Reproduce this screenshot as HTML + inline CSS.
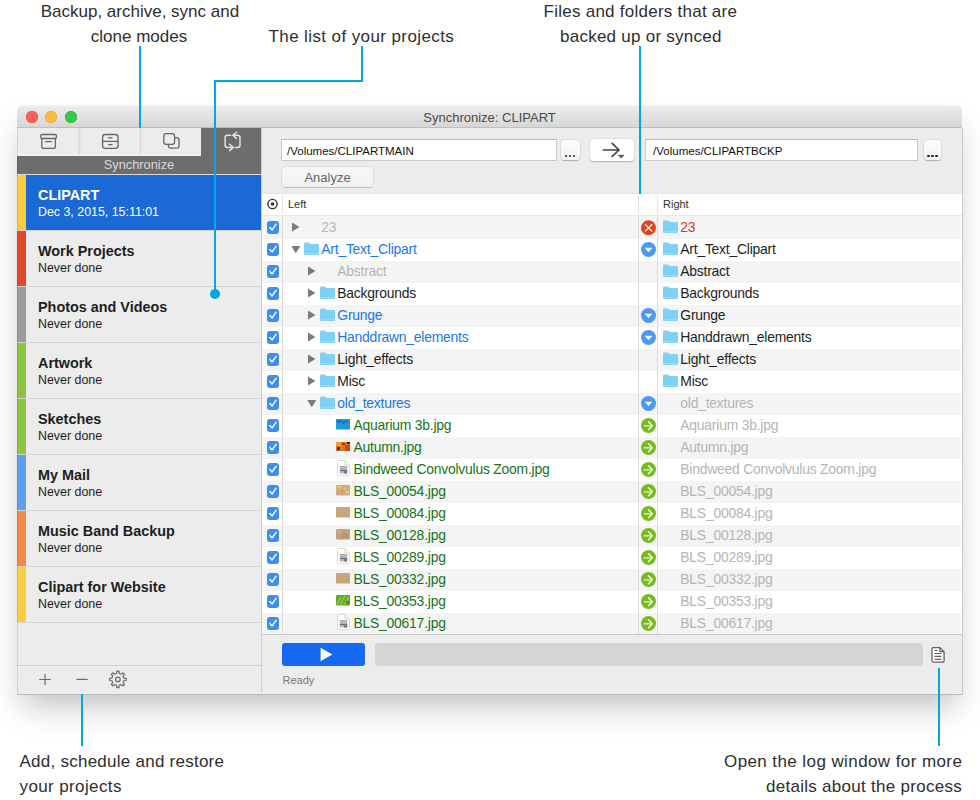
<!DOCTYPE html><html><head><meta charset="utf-8"><style>
*{box-sizing:border-box;margin:0;padding:0}
html,body{width:980px;height:800px;overflow:hidden;background:#fff;font-family:"Liberation Sans",sans-serif;position:relative}
div,span,svg{position:absolute;white-space:nowrap}
.ann{font-size:17px;color:#2e2e2e;line-height:20px}
.bl{background:#00a8e6}
.tl{top:111px;width:12px;height:12px;border-radius:50%}
.st{left:17px;width:8.5px;height:55px}
.nm{left:38px;font-size:14.4px;font-weight:bold;color:#1e1e1e}
.dt{left:38px;font-size:12.4px;color:#1e1e1e}
.sep{background:#d6d6d6;height:1.4px;left:17px;width:244px}
.tx{font-size:13.9px;line-height:16px;letter-spacing:-0.22px}
.cb{left:266.5px;width:12px;height:12.3px;border-radius:3px;background:#3a8ff5}
.fo{width:16px;height:14px}
.ic{width:15px;height:15px}
</style></head><body>
<div class="ann" style="left:40.7px;top:2px;letter-spacing:0px">Backup, archive, sync and</div>
<div class="ann" style="left:90.8px;top:27px;letter-spacing:0px">clone modes</div>
<div class="ann" style="left:268.5px;top:27px;letter-spacing:0.4px">The list of your projects</div>
<div class="ann" style="left:543.6px;top:2px;letter-spacing:0.25px">Files and folders that are</div>
<div class="ann" style="left:560px;top:27px;letter-spacing:0.25px">backed up or synced</div>
<div class="ann" style="left:19.5px;top:752px;letter-spacing:0.25px">Add, schedule and restore</div>
<div class="ann" style="left:19.5px;top:777px;letter-spacing:0.38px">your projects</div>
<div class="ann" style="left:724px;top:752px;letter-spacing:0.41px">Open the log window for more</div>
<div class="ann" style="left:766px;top:777px;letter-spacing:0.28px">details about the process</div>
<div style="left:17px;top:105px;width:945px;height:589px;background:#ececec;border-radius:6px 6px 0 0;box-shadow:0 18px 30px -6px rgba(0,0,0,0.25)"></div>
<div style="left:17px;top:105px;width:945px;height:23px;background:linear-gradient(#f6f6f6,#ebebeb 9%,#d6d6d6);border-bottom:1px solid #bfbfbf;border-radius:6px 6px 0 0"></div>
<div class="tl" style="left:25.6px;background:#fc605c;box-shadow:inset 0 0 0 0.5px #de4a45"></div>
<div class="tl" style="left:45.4px;background:#fdbc40;box-shadow:inset 0 0 0 0.5px #dea236"></div>
<div class="tl" style="left:65.3px;background:#34c84a;box-shadow:inset 0 0 0 0.5px #27aa35"></div>
<div style="left:17px;top:110px;width:945px;text-align:center;font-size:13px;color:#4a4a4a">Synchronize: CLIPART</div>
<div style="left:17px;top:128px;width:244px;height:566px;background:#ececec"></div>
<div style="left:261px;top:128px;width:1px;height:566px;background:#cdcdcd"></div>
<div style="left:201px;top:128px;width:60px;height:46px;background:#6d6d6d"></div>
<div style="left:17px;top:155.5px;width:244px;height:18.5px;background:#6d6d6d"></div>
<div style="left:77.8px;top:128px;width:3px;height:27px;background:linear-gradient(90deg,#f3f3f3,#d9d9d9 30%,#d9d9d9 70%,#f3f3f3)"></div>
<div style="left:138.8px;top:128px;width:3px;height:27px;background:linear-gradient(90deg,#f3f3f3,#d9d9d9 30%,#d9d9d9 70%,#f3f3f3)"></div>
<div style="left:17px;top:153.5px;width:184px;height:2px;background:#f1f1f1"></div>
<div style="left:17px;top:157.3px;width:244px;text-align:center;font-size:12.8px;color:#d9d9d9">Synchronize</div>
<div style="left:17px;top:174px;width:244px;height:1px;background:#dcdcdc"></div>
<svg style="left:0;top:0" width="262" height="175" viewBox="0 0 262 175" fill="none" stroke-linecap="round"><rect x="40.8" y="134.5" width="15.6" height="4" rx="1.3" stroke="#666" stroke-width="1.3"/><path d="M41.8 138.5 V146.4 a2 2 0 0 0 2 2 H53.4 a2 2 0 0 0 2-2 V138.5" stroke="#666" stroke-width="1.3"/><path d="M45.6 141.6 H51.6" stroke="#666" stroke-width="1.3"/><rect x="102.6" y="134.5" width="15.4" height="13.9" rx="2.6" stroke="#666" stroke-width="1.3"/><path d="M102.6 141.3 H118" stroke="#666" stroke-width="1.3"/><path d="M108.6 137.8 H112 M108.6 144.6 H112" stroke="#666" stroke-width="1.3"/><rect x="163.8" y="133.6" width="10.8" height="10.8" rx="2.4" stroke="#666" stroke-width="1.3"/><path d="M174.6 137.6 H176.6 a2.4 2.4 0 0 1 2.4 2.4 V145.8 a2.4 2.4 0 0 1-2.4 2.4 H170.8 a2.4 2.4 0 0 1-2.4-2.4 V144.4" stroke="#666" stroke-width="1.3"/><g stroke="#e4e4e4" stroke-width="1.5"><path d="M230.6 135.3 H227.6 a2.5 2.5 0 0 0-2.5 2.5 V145 a2.5 2.5 0 0 0 2.5 2.5 H233.2"/><path d="M229.6 144.4 L233.2 147.5 L229.6 150.6"/><path d="M233 135.3 H237.5 a2.5 2.5 0 0 1 2.5 2.5 V145 a2.5 2.5 0 0 1-2.5 2.5 H235.4"/><path d="M236.5 132.2 L233 135.3 L236.5 138.4"/></g></svg>
<div style="left:25.5px;top:175px;width:235.5px;height:55px;background:#1a69d6"></div>
<div class="st" style="top:175px;background:#f9cd3e"></div>
<div class="nm" style="top:187px;color:#fff">CLIPART</div>
<div class="dt" style="top:205px;color:#fff">Dec 3, 2015, 15:11:01</div>
<div class="sep" style="top:230px"></div>
<div class="st" style="top:231px;background:#e2492b"></div>
<div class="nm" style="top:243px;color:#1e1e1e">Work Projects</div>
<div class="dt" style="top:261px;color:#1e1e1e">Never done</div>
<div class="sep" style="top:286px"></div>
<div class="st" style="top:287px;background:#9c9c9c"></div>
<div class="nm" style="top:299px;color:#1e1e1e">Photos and Videos</div>
<div class="dt" style="top:317px;color:#1e1e1e">Never done</div>
<div class="sep" style="top:342px"></div>
<div class="st" style="top:343px;background:#8cc43f"></div>
<div class="nm" style="top:355px;color:#1e1e1e">Artwork</div>
<div class="dt" style="top:373px;color:#1e1e1e">Never done</div>
<div class="sep" style="top:398px"></div>
<div class="st" style="top:399px;background:#8cc43f"></div>
<div class="nm" style="top:411px;color:#1e1e1e">Sketches</div>
<div class="dt" style="top:429px;color:#1e1e1e">Never done</div>
<div class="sep" style="top:454px"></div>
<div class="st" style="top:455px;background:#5ba0f1"></div>
<div class="nm" style="top:467px;color:#1e1e1e">My Mail</div>
<div class="dt" style="top:485px;color:#1e1e1e">Never done</div>
<div class="sep" style="top:510px"></div>
<div class="st" style="top:511px;background:#f38a4a"></div>
<div class="nm" style="top:523px;color:#1e1e1e">Music Band Backup</div>
<div class="dt" style="top:541px;color:#1e1e1e">Never done</div>
<div class="sep" style="top:566px"></div>
<div class="st" style="top:567px;background:#f9cd3e"></div>
<div class="nm" style="top:579px;color:#1e1e1e">Clipart for Website</div>
<div class="dt" style="top:597px;color:#1e1e1e">Never done</div>
<div class="sep" style="top:622px"></div>
<div style="left:17px;top:665px;width:244px;height:1px;background:#cfcfcf"></div>
<svg style="left:0;top:660px" width="262" height="40" viewBox="0 660 262 40" fill="none" stroke="#6a6a6a" stroke-width="1.2"><path d="M39.3 679.5 H50.8 M45.05 674 V685"/><path d="M76.4 679.4 H87.7"/><path d="M123.84 678.03 L126.13 678.32 L126.13 680.48 L123.84 680.77 L123.07 682.63 L124.48 684.45 L122.95 685.98 L121.13 684.57 L119.27 685.34 L118.98 687.63 L116.82 687.63 L116.53 685.34 L114.67 684.57 L112.85 685.98 L111.32 684.45 L112.73 682.63 L111.96 680.77 L109.67 680.48 L109.67 678.32 L111.96 678.03 L112.73 676.17 L111.32 674.35 L112.85 672.82 L114.67 674.23 L116.53 673.46 L116.82 671.17 L118.98 671.17 L119.27 673.46 L121.13 674.23 L122.95 672.82 L124.48 674.35 L123.07 676.17 Z" stroke-linejoin="round"/><circle cx="117.9" cy="679.4" r="2.3"/></svg>
<div style="left:17px;top:693px;width:945px;height:1px;background:#f0f0f0"></div>
<div style="left:17px;top:694px;width:945px;height:1px;background:#b8b8b8"></div>
<div style="left:17px;top:128px;width:1px;height:566px;background:rgba(0,0,0,0.1)"></div>
<div style="left:962px;top:128px;width:1px;height:567px;background:#c9c9c9"></div>
<div style="left:262px;top:128px;width:700px;height:66px;background:#ececec"></div>
<div style="left:280.5px;top:139px;width:276.0px;height:22px;background:#fff;border:1px solid #cacaca;border-top-color:#bdbdbd"></div>
<div style="left:287.0px;top:145px;font-size:11.5px;color:#111">/Volumes/CLIPARTMAIN</div>
<div style="left:560.5px;top:139.6px;width:19.5px;height:20.7px;border-radius:3.5px;background:linear-gradient(#fdfdfd,#f3f3f3);box-shadow:0 0 0 0.5px rgba(0,0,0,0.1),0 0.5px 1px rgba(0,0,0,0.22)"></div>
<div style="left:565.15px;top:154.8px;width:2.2px;height:2.2px;border-radius:50%;background:#222"></div>
<div style="left:569.15px;top:154.8px;width:2.2px;height:2.2px;border-radius:50%;background:#222"></div>
<div style="left:573.15px;top:154.8px;width:2.2px;height:2.2px;border-radius:50%;background:#222"></div>
<div style="left:644.6px;top:139px;width:273.9px;height:22px;background:#fff;border:1px solid #cacaca;border-top-color:#bdbdbd"></div>
<div style="left:653.1px;top:145px;font-size:11.5px;color:#111">/Volumes/CLIPARTBCKP</div>
<div style="left:923.7px;top:139.6px;width:17.5px;height:20.7px;border-radius:3.5px;background:linear-gradient(#fdfdfd,#f3f3f3);box-shadow:0 0 0 0.5px rgba(0,0,0,0.1),0 0.5px 1px rgba(0,0,0,0.22)"></div>
<div style="left:927.35px;top:154.8px;width:2.2px;height:2.2px;border-radius:50%;background:#222"></div>
<div style="left:931.35px;top:154.8px;width:2.2px;height:2.2px;border-radius:50%;background:#222"></div>
<div style="left:935.35px;top:154.8px;width:2.2px;height:2.2px;border-radius:50%;background:#222"></div>
<div style="left:590px;top:139px;width:44px;height:22px;border-radius:4px;background:#fff;box-shadow:0 0.5px 1.5px rgba(0,0,0,0.25)"></div>
<svg style="left:590px;top:139px" width="44" height="22" viewBox="590 139 44 22" fill="none" stroke="#444" stroke-width="1.7" stroke-linecap="round" stroke-linejoin="round"><path d="M603.3 150 H619 M612.2 143.4 L619 150 L612.2 156.4"/><path d="M618.4 155.2 H624 L621.2 158 Z" fill="#444" stroke-width="0.5"/></svg>
<div style="left:282px;top:166.8px;width:91px;height:20.5px;border-radius:4px;background:linear-gradient(#f7f7f7,#f1f1f1);box-shadow:0 0 0 0.5px rgba(0,0,0,0.12),0 0.5px 1px rgba(0,0,0,0.15)"></div>
<div style="left:282px;top:170px;width:91px;text-align:center;font-size:13px;color:#666">Analyze</div>
<div style="left:262px;top:194px;width:700px;height:440px;background:#fff"></div>
<div style="left:262px;top:215px;width:700px;height:1px;background:#e8e8e8"></div>
<div style="left:262px;top:193px;width:700px;height:1px;background:#e2e2e2"></div>
<div style="left:282px;top:196px;width:1px;height:17px;background:#e2e2e2"></div>
<div style="left:638px;top:196px;width:1px;height:17px;background:#e2e2e2"></div>
<div style="left:657px;top:196px;width:1px;height:17px;background:#e2e2e2"></div>
<svg style="left:266px;top:198px" width="13" height="13" viewBox="0 0 13 13"><circle cx="6.5" cy="6" r="4.6" fill="none" stroke="#333" stroke-width="1.4"/><circle cx="6.5" cy="6" r="1.8" fill="#333"/></svg>
<div style="left:288px;top:198px;font-size:11px;color:#333">Left</div>
<div style="left:663px;top:198px;font-size:11px;color:#333">Right</div>
<div style="left:262px;top:216px;width:699px;height:22.6px;background:#f4f4f4"></div>
<div class="cb" style="top:221.3px"></div>
<svg style="left:266.5px;top:221.3px" width="12" height="12" viewBox="0 0 12 12"><path d="M2.9 6.6 L5.1 8.9 L9.2 3.2" fill="none" stroke="#fff" stroke-width="1.4" stroke-linecap="round" stroke-linejoin="round"/></svg>
<svg style="left:291px;top:222px" width="10" height="10" viewBox="0 0 10 10"><path d="M1 0.5 L8.5 5 L1 9.5 Z" fill="#7b7b7b"/></svg>
<div class="tx" style="left:321.3px;top:219px;color:#b5b5b5">23</div>
<svg class="ic" style="left:641.4px;top:220px" viewBox="0 0 15 15"><circle cx="7.5" cy="7.7" r="7.5" fill="#df431f"/><path d="M4.3 4.5 L10.9 11.1 M10.9 4.5 L4.3 11.1" stroke="#fff" stroke-width="1.2" stroke-linecap="round"/></svg>
<svg class="fo" style="left:663px;top:220px" width="16" height="14" viewBox="0 0 16 14"><path d="M0 1.4 a1 1 0 0 1 1-1 H4.8 a1 1 0 0 1 0.8 0.4 L6.6 1.9 H14 a1 1 0 0 1 1 1 V11.8 a1 1 0 0 1-1 1 H1 a1 1 0 0 1-1-1 Z" fill="#88d0f2"/><path d="M0 3.2 H15 V11.8 a1 1 0 0 1-1 1 H1 a1 1 0 0 1-1-1 Z" fill="#7dd0f6"/><rect x="0.6" y="10.8" width="13.8" height="1.2" fill="#92dcfa"/></svg>
<div class="tx" style="left:680.3px;top:219px;color:#d8401f">23</div>
<div class="cb" style="top:243.3px"></div>
<svg style="left:266.5px;top:243.3px" width="12" height="12" viewBox="0 0 12 12"><path d="M2.9 6.6 L5.1 8.9 L9.2 3.2" fill="none" stroke="#fff" stroke-width="1.4" stroke-linecap="round" stroke-linejoin="round"/></svg>
<svg style="left:291px;top:245px" width="10" height="10" viewBox="0 0 10 10"><path d="M0.3 1 L9.3 1 L4.8 8.2 Z" fill="#7b7b7b"/></svg>
<svg class="fo" style="left:304px;top:242px" width="16" height="14" viewBox="0 0 16 14"><path d="M0 1.4 a1 1 0 0 1 1-1 H4.8 a1 1 0 0 1 0.8 0.4 L6.6 1.9 H14 a1 1 0 0 1 1 1 V11.8 a1 1 0 0 1-1 1 H1 a1 1 0 0 1-1-1 Z" fill="#88d0f2"/><path d="M0 3.2 H15 V11.8 a1 1 0 0 1-1 1 H1 a1 1 0 0 1-1-1 Z" fill="#7dd0f6"/><rect x="0.6" y="10.8" width="13.8" height="1.2" fill="#92dcfa"/></svg>
<div class="tx" style="left:321.3px;top:241px;color:#1877f0">Art_Text_Clipart</div>
<svg class="ic" style="left:641.4px;top:242px" viewBox="0 0 15 15"><circle cx="7.5" cy="7.5" r="7.5" fill="#4b99f5"/><path d="M3.7 5.7 H11.3 L7.5 10.3 Z" fill="#fff"/></svg>
<svg class="fo" style="left:663px;top:242px" width="16" height="14" viewBox="0 0 16 14"><path d="M0 1.4 a1 1 0 0 1 1-1 H4.8 a1 1 0 0 1 0.8 0.4 L6.6 1.9 H14 a1 1 0 0 1 1 1 V11.8 a1 1 0 0 1-1 1 H1 a1 1 0 0 1-1-1 Z" fill="#88d0f2"/><path d="M0 3.2 H15 V11.8 a1 1 0 0 1-1 1 H1 a1 1 0 0 1-1-1 Z" fill="#7dd0f6"/><rect x="0.6" y="10.8" width="13.8" height="1.2" fill="#92dcfa"/></svg>
<div class="tx" style="left:680.3px;top:241px;color:#1e1e1e">Art_Text_Clipart</div>
<div style="left:262px;top:260.6px;width:699px;height:22px;background:#f4f4f4"></div>
<div class="cb" style="top:265.3px"></div>
<svg style="left:266.5px;top:265.3px" width="12" height="12" viewBox="0 0 12 12"><path d="M2.9 6.6 L5.1 8.9 L9.2 3.2" fill="none" stroke="#fff" stroke-width="1.4" stroke-linecap="round" stroke-linejoin="round"/></svg>
<svg style="left:307px;top:266px" width="10" height="10" viewBox="0 0 10 10"><path d="M1 0.5 L8.5 5 L1 9.5 Z" fill="#7b7b7b"/></svg>
<div class="tx" style="left:337.3px;top:263px;color:#b5b5b5">Abstract</div>
<svg class="fo" style="left:663px;top:264px" width="16" height="14" viewBox="0 0 16 14"><path d="M0 1.4 a1 1 0 0 1 1-1 H4.8 a1 1 0 0 1 0.8 0.4 L6.6 1.9 H14 a1 1 0 0 1 1 1 V11.8 a1 1 0 0 1-1 1 H1 a1 1 0 0 1-1-1 Z" fill="#88d0f2"/><path d="M0 3.2 H15 V11.8 a1 1 0 0 1-1 1 H1 a1 1 0 0 1-1-1 Z" fill="#7dd0f6"/><rect x="0.6" y="10.8" width="13.8" height="1.2" fill="#92dcfa"/></svg>
<div class="tx" style="left:680.3px;top:263px;color:#1e1e1e">Abstract</div>
<div class="cb" style="top:287.3px"></div>
<svg style="left:266.5px;top:287.3px" width="12" height="12" viewBox="0 0 12 12"><path d="M2.9 6.6 L5.1 8.9 L9.2 3.2" fill="none" stroke="#fff" stroke-width="1.4" stroke-linecap="round" stroke-linejoin="round"/></svg>
<svg style="left:307px;top:288px" width="10" height="10" viewBox="0 0 10 10"><path d="M1 0.5 L8.5 5 L1 9.5 Z" fill="#7b7b7b"/></svg>
<svg class="fo" style="left:320px;top:286px" width="16" height="14" viewBox="0 0 16 14"><path d="M0 1.4 a1 1 0 0 1 1-1 H4.8 a1 1 0 0 1 0.8 0.4 L6.6 1.9 H14 a1 1 0 0 1 1 1 V11.8 a1 1 0 0 1-1 1 H1 a1 1 0 0 1-1-1 Z" fill="#88d0f2"/><path d="M0 3.2 H15 V11.8 a1 1 0 0 1-1 1 H1 a1 1 0 0 1-1-1 Z" fill="#7dd0f6"/><rect x="0.6" y="10.8" width="13.8" height="1.2" fill="#92dcfa"/></svg>
<div class="tx" style="left:337.3px;top:285px;color:#1e1e1e">Backgrounds</div>
<svg class="fo" style="left:663px;top:286px" width="16" height="14" viewBox="0 0 16 14"><path d="M0 1.4 a1 1 0 0 1 1-1 H4.8 a1 1 0 0 1 0.8 0.4 L6.6 1.9 H14 a1 1 0 0 1 1 1 V11.8 a1 1 0 0 1-1 1 H1 a1 1 0 0 1-1-1 Z" fill="#88d0f2"/><path d="M0 3.2 H15 V11.8 a1 1 0 0 1-1 1 H1 a1 1 0 0 1-1-1 Z" fill="#7dd0f6"/><rect x="0.6" y="10.8" width="13.8" height="1.2" fill="#92dcfa"/></svg>
<div class="tx" style="left:680.3px;top:285px;color:#1e1e1e">Backgrounds</div>
<div style="left:262px;top:304.6px;width:699px;height:22px;background:#f4f4f4"></div>
<div class="cb" style="top:309.3px"></div>
<svg style="left:266.5px;top:309.3px" width="12" height="12" viewBox="0 0 12 12"><path d="M2.9 6.6 L5.1 8.9 L9.2 3.2" fill="none" stroke="#fff" stroke-width="1.4" stroke-linecap="round" stroke-linejoin="round"/></svg>
<svg style="left:307px;top:310px" width="10" height="10" viewBox="0 0 10 10"><path d="M1 0.5 L8.5 5 L1 9.5 Z" fill="#7b7b7b"/></svg>
<svg class="fo" style="left:320px;top:308px" width="16" height="14" viewBox="0 0 16 14"><path d="M0 1.4 a1 1 0 0 1 1-1 H4.8 a1 1 0 0 1 0.8 0.4 L6.6 1.9 H14 a1 1 0 0 1 1 1 V11.8 a1 1 0 0 1-1 1 H1 a1 1 0 0 1-1-1 Z" fill="#88d0f2"/><path d="M0 3.2 H15 V11.8 a1 1 0 0 1-1 1 H1 a1 1 0 0 1-1-1 Z" fill="#7dd0f6"/><rect x="0.6" y="10.8" width="13.8" height="1.2" fill="#92dcfa"/></svg>
<div class="tx" style="left:337.3px;top:307px;color:#1877f0">Grunge</div>
<svg class="ic" style="left:641.4px;top:308px" viewBox="0 0 15 15"><circle cx="7.5" cy="7.5" r="7.5" fill="#4b99f5"/><path d="M3.7 5.7 H11.3 L7.5 10.3 Z" fill="#fff"/></svg>
<svg class="fo" style="left:663px;top:308px" width="16" height="14" viewBox="0 0 16 14"><path d="M0 1.4 a1 1 0 0 1 1-1 H4.8 a1 1 0 0 1 0.8 0.4 L6.6 1.9 H14 a1 1 0 0 1 1 1 V11.8 a1 1 0 0 1-1 1 H1 a1 1 0 0 1-1-1 Z" fill="#88d0f2"/><path d="M0 3.2 H15 V11.8 a1 1 0 0 1-1 1 H1 a1 1 0 0 1-1-1 Z" fill="#7dd0f6"/><rect x="0.6" y="10.8" width="13.8" height="1.2" fill="#92dcfa"/></svg>
<div class="tx" style="left:680.3px;top:307px;color:#1e1e1e">Grunge</div>
<div class="cb" style="top:331.3px"></div>
<svg style="left:266.5px;top:331.3px" width="12" height="12" viewBox="0 0 12 12"><path d="M2.9 6.6 L5.1 8.9 L9.2 3.2" fill="none" stroke="#fff" stroke-width="1.4" stroke-linecap="round" stroke-linejoin="round"/></svg>
<svg style="left:307px;top:332px" width="10" height="10" viewBox="0 0 10 10"><path d="M1 0.5 L8.5 5 L1 9.5 Z" fill="#7b7b7b"/></svg>
<svg class="fo" style="left:320px;top:330px" width="16" height="14" viewBox="0 0 16 14"><path d="M0 1.4 a1 1 0 0 1 1-1 H4.8 a1 1 0 0 1 0.8 0.4 L6.6 1.9 H14 a1 1 0 0 1 1 1 V11.8 a1 1 0 0 1-1 1 H1 a1 1 0 0 1-1-1 Z" fill="#88d0f2"/><path d="M0 3.2 H15 V11.8 a1 1 0 0 1-1 1 H1 a1 1 0 0 1-1-1 Z" fill="#7dd0f6"/><rect x="0.6" y="10.8" width="13.8" height="1.2" fill="#92dcfa"/></svg>
<div class="tx" style="left:337.3px;top:329px;color:#1877f0">Handdrawn_elements</div>
<svg class="ic" style="left:641.4px;top:330px" viewBox="0 0 15 15"><circle cx="7.5" cy="7.5" r="7.5" fill="#4b99f5"/><path d="M3.7 5.7 H11.3 L7.5 10.3 Z" fill="#fff"/></svg>
<svg class="fo" style="left:663px;top:330px" width="16" height="14" viewBox="0 0 16 14"><path d="M0 1.4 a1 1 0 0 1 1-1 H4.8 a1 1 0 0 1 0.8 0.4 L6.6 1.9 H14 a1 1 0 0 1 1 1 V11.8 a1 1 0 0 1-1 1 H1 a1 1 0 0 1-1-1 Z" fill="#88d0f2"/><path d="M0 3.2 H15 V11.8 a1 1 0 0 1-1 1 H1 a1 1 0 0 1-1-1 Z" fill="#7dd0f6"/><rect x="0.6" y="10.8" width="13.8" height="1.2" fill="#92dcfa"/></svg>
<div class="tx" style="left:680.3px;top:329px;color:#1e1e1e">Handdrawn_elements</div>
<div style="left:262px;top:348.6px;width:699px;height:22px;background:#f4f4f4"></div>
<div class="cb" style="top:353.3px"></div>
<svg style="left:266.5px;top:353.3px" width="12" height="12" viewBox="0 0 12 12"><path d="M2.9 6.6 L5.1 8.9 L9.2 3.2" fill="none" stroke="#fff" stroke-width="1.4" stroke-linecap="round" stroke-linejoin="round"/></svg>
<svg style="left:307px;top:354px" width="10" height="10" viewBox="0 0 10 10"><path d="M1 0.5 L8.5 5 L1 9.5 Z" fill="#7b7b7b"/></svg>
<svg class="fo" style="left:320px;top:352px" width="16" height="14" viewBox="0 0 16 14"><path d="M0 1.4 a1 1 0 0 1 1-1 H4.8 a1 1 0 0 1 0.8 0.4 L6.6 1.9 H14 a1 1 0 0 1 1 1 V11.8 a1 1 0 0 1-1 1 H1 a1 1 0 0 1-1-1 Z" fill="#88d0f2"/><path d="M0 3.2 H15 V11.8 a1 1 0 0 1-1 1 H1 a1 1 0 0 1-1-1 Z" fill="#7dd0f6"/><rect x="0.6" y="10.8" width="13.8" height="1.2" fill="#92dcfa"/></svg>
<div class="tx" style="left:337.3px;top:351px;color:#1e1e1e">Light_effects</div>
<svg class="fo" style="left:663px;top:352px" width="16" height="14" viewBox="0 0 16 14"><path d="M0 1.4 a1 1 0 0 1 1-1 H4.8 a1 1 0 0 1 0.8 0.4 L6.6 1.9 H14 a1 1 0 0 1 1 1 V11.8 a1 1 0 0 1-1 1 H1 a1 1 0 0 1-1-1 Z" fill="#88d0f2"/><path d="M0 3.2 H15 V11.8 a1 1 0 0 1-1 1 H1 a1 1 0 0 1-1-1 Z" fill="#7dd0f6"/><rect x="0.6" y="10.8" width="13.8" height="1.2" fill="#92dcfa"/></svg>
<div class="tx" style="left:680.3px;top:351px;color:#1e1e1e">Light_effects</div>
<div class="cb" style="top:375.3px"></div>
<svg style="left:266.5px;top:375.3px" width="12" height="12" viewBox="0 0 12 12"><path d="M2.9 6.6 L5.1 8.9 L9.2 3.2" fill="none" stroke="#fff" stroke-width="1.4" stroke-linecap="round" stroke-linejoin="round"/></svg>
<svg style="left:307px;top:376px" width="10" height="10" viewBox="0 0 10 10"><path d="M1 0.5 L8.5 5 L1 9.5 Z" fill="#7b7b7b"/></svg>
<svg class="fo" style="left:320px;top:374px" width="16" height="14" viewBox="0 0 16 14"><path d="M0 1.4 a1 1 0 0 1 1-1 H4.8 a1 1 0 0 1 0.8 0.4 L6.6 1.9 H14 a1 1 0 0 1 1 1 V11.8 a1 1 0 0 1-1 1 H1 a1 1 0 0 1-1-1 Z" fill="#88d0f2"/><path d="M0 3.2 H15 V11.8 a1 1 0 0 1-1 1 H1 a1 1 0 0 1-1-1 Z" fill="#7dd0f6"/><rect x="0.6" y="10.8" width="13.8" height="1.2" fill="#92dcfa"/></svg>
<div class="tx" style="left:337.3px;top:373px;color:#1e1e1e">Misc</div>
<svg class="fo" style="left:663px;top:374px" width="16" height="14" viewBox="0 0 16 14"><path d="M0 1.4 a1 1 0 0 1 1-1 H4.8 a1 1 0 0 1 0.8 0.4 L6.6 1.9 H14 a1 1 0 0 1 1 1 V11.8 a1 1 0 0 1-1 1 H1 a1 1 0 0 1-1-1 Z" fill="#88d0f2"/><path d="M0 3.2 H15 V11.8 a1 1 0 0 1-1 1 H1 a1 1 0 0 1-1-1 Z" fill="#7dd0f6"/><rect x="0.6" y="10.8" width="13.8" height="1.2" fill="#92dcfa"/></svg>
<div class="tx" style="left:680.3px;top:373px;color:#1e1e1e">Misc</div>
<div style="left:262px;top:392.6px;width:699px;height:22px;background:#f4f4f4"></div>
<div class="cb" style="top:397.3px"></div>
<svg style="left:266.5px;top:397.3px" width="12" height="12" viewBox="0 0 12 12"><path d="M2.9 6.6 L5.1 8.9 L9.2 3.2" fill="none" stroke="#fff" stroke-width="1.4" stroke-linecap="round" stroke-linejoin="round"/></svg>
<svg style="left:307px;top:399px" width="10" height="10" viewBox="0 0 10 10"><path d="M0.3 1 L9.3 1 L4.8 8.2 Z" fill="#7b7b7b"/></svg>
<svg class="fo" style="left:320px;top:396px" width="16" height="14" viewBox="0 0 16 14"><path d="M0 1.4 a1 1 0 0 1 1-1 H4.8 a1 1 0 0 1 0.8 0.4 L6.6 1.9 H14 a1 1 0 0 1 1 1 V11.8 a1 1 0 0 1-1 1 H1 a1 1 0 0 1-1-1 Z" fill="#88d0f2"/><path d="M0 3.2 H15 V11.8 a1 1 0 0 1-1 1 H1 a1 1 0 0 1-1-1 Z" fill="#7dd0f6"/><rect x="0.6" y="10.8" width="13.8" height="1.2" fill="#92dcfa"/></svg>
<div class="tx" style="left:337.3px;top:395px;color:#1877f0">old_textures</div>
<svg class="ic" style="left:641.4px;top:396px" viewBox="0 0 15 15"><circle cx="7.5" cy="7.5" r="7.5" fill="#4b99f5"/><path d="M3.7 5.7 H11.3 L7.5 10.3 Z" fill="#fff"/></svg>
<div class="tx" style="left:680.3px;top:395px;color:#b5b5b5">old_textures</div>
<div class="cb" style="top:419.3px"></div>
<svg style="left:266.5px;top:419.3px" width="12" height="12" viewBox="0 0 12 12"><path d="M2.9 6.6 L5.1 8.9 L9.2 3.2" fill="none" stroke="#fff" stroke-width="1.4" stroke-linecap="round" stroke-linejoin="round"/></svg>
<svg style="left:336.1px;top:419px" width="14.3" height="10.7" viewBox="0 0 14.3 10.7"><clipPath id="c9"><rect width="14.3" height="10.7" rx="1.3"/></clipPath><g clip-path="url(#c9)"><rect width="14.3" height="10.7" fill="#1f97dc"/><path d="M0.5 1 L3 3.5 L5 1.5 L7.5 4.5 L10 2 L13 4" stroke="#1a6aa8" stroke-width="1.1" fill="none"/><path d="M1 6 L4 8.5" stroke="#3aa8e8" stroke-width="0.8"/></g></svg>
<div class="tx" style="left:353.5px;top:417px;color:#167516">Aquarium 3b.jpg</div>
<svg class="ic" style="left:641.4px;top:418px" viewBox="0 0 15 15"><circle cx="7.5" cy="7.5" r="7.5" fill="#78bb20"/><path d="M3.2 7.8 H10.8" stroke="#e6f3d2" stroke-width="1.3" stroke-linecap="round"/><path d="M7.4 3.8 L11.3 7.8 L7.4 11.8" fill="none" stroke="#fff" stroke-width="1.3" stroke-linecap="round" stroke-linejoin="round"/></svg>
<div class="tx" style="left:680.3px;top:417px;color:#b5b5b5">Aquarium 3b.jpg</div>
<div style="left:262px;top:436.6px;width:699px;height:22px;background:#f4f4f4"></div>
<div class="cb" style="top:441.3px"></div>
<svg style="left:266.5px;top:441.3px" width="12" height="12" viewBox="0 0 12 12"><path d="M2.9 6.6 L5.1 8.9 L9.2 3.2" fill="none" stroke="#fff" stroke-width="1.4" stroke-linecap="round" stroke-linejoin="round"/></svg>
<svg style="left:336.1px;top:441.5px" width="14.3" height="9.6" viewBox="0 0 14.3 9.6"><clipPath id="c10"><rect width="14.3" height="9.6" rx="1.3"/></clipPath><g clip-path="url(#c10)"><rect width="14.3" height="9.6" fill="#e07a1c"/><rect x="0" y="0" width="5" height="4" fill="#f0a030"/><rect x="9" y="3" width="5.3" height="6.6" fill="#d8401a"/><rect x="1" y="5" width="3" height="3" fill="#5a3010"/><rect x="6" y="1" width="3" height="2" fill="#c02a10"/><rect x="1" y="8" width="6" height="1.6" fill="#8a7a70"/><rect x="11" y="0" width="3" height="2" fill="#402010"/></g></svg>
<div class="tx" style="left:353.5px;top:439px;color:#167516">Autumn.jpg</div>
<svg class="ic" style="left:641.4px;top:440px" viewBox="0 0 15 15"><circle cx="7.5" cy="7.5" r="7.5" fill="#78bb20"/><path d="M3.2 7.8 H10.8" stroke="#e6f3d2" stroke-width="1.3" stroke-linecap="round"/><path d="M7.4 3.8 L11.3 7.8 L7.4 11.8" fill="none" stroke="#fff" stroke-width="1.3" stroke-linecap="round" stroke-linejoin="round"/></svg>
<div class="tx" style="left:680.3px;top:439px;color:#b5b5b5">Autumn.jpg</div>
<div class="cb" style="top:463.3px"></div>
<svg style="left:266.5px;top:463.3px" width="12" height="12" viewBox="0 0 12 12"><path d="M2.9 6.6 L5.1 8.9 L9.2 3.2" fill="none" stroke="#fff" stroke-width="1.4" stroke-linecap="round" stroke-linejoin="round"/></svg>
<svg style="left:337px;top:460px" width="13" height="17" viewBox="0 0 13 17"><path d="M1.5 0.5 H7.8 L12.5 5.2 V14.6 a1 1 0 0 1-1 1 H1.5 a1 1 0 0 1-1-1 V1.5 a1 1 0 0 1 1-1 Z" fill="#fff" stroke="#d4d4d4" stroke-width="0.9"/><path d="M7.8 0.5 V4.2 a1 1 0 0 0 1 1 H12.5" fill="#f2f2f2" stroke="#d4d4d4" stroke-width="0.8"/><rect x="2.8" y="6" width="7.4" height="1.3" fill="#c9a27a"/><rect x="2.8" y="7.3" width="7.4" height="2.6" fill="#8fb8ec"/><rect x="2.8" y="9.9" width="7.4" height="1.6" fill="#5a6e8a"/><rect x="2.8" y="11.5" width="4" height="2" fill="#b7b7b7"/><circle cx="8.6" cy="12" r="1.9" fill="#8a7a6a"/></svg>
<div class="tx" style="left:353.5px;top:461px;color:#167516">Bindweed Convolvulus Zoom.jpg</div>
<svg class="ic" style="left:641.4px;top:462px" viewBox="0 0 15 15"><circle cx="7.5" cy="7.5" r="7.5" fill="#78bb20"/><path d="M3.2 7.8 H10.8" stroke="#e6f3d2" stroke-width="1.3" stroke-linecap="round"/><path d="M7.4 3.8 L11.3 7.8 L7.4 11.8" fill="none" stroke="#fff" stroke-width="1.3" stroke-linecap="round" stroke-linejoin="round"/></svg>
<div class="tx" style="left:680.3px;top:461px;color:#b5b5b5">Bindweed Convolvulus Zoom.jpg</div>
<div style="left:262px;top:480.6px;width:699px;height:22px;background:#f4f4f4"></div>
<div class="cb" style="top:485.3px"></div>
<svg style="left:266.5px;top:485.3px" width="12" height="12" viewBox="0 0 12 12"><path d="M2.9 6.6 L5.1 8.9 L9.2 3.2" fill="none" stroke="#fff" stroke-width="1.4" stroke-linecap="round" stroke-linejoin="round"/></svg>
<svg style="left:336.1px;top:485px" width="14.3" height="10.7" viewBox="0 0 14.3 10.7"><clipPath id="c12"><rect width="14.3" height="10.7" rx="1.3"/></clipPath><g clip-path="url(#c12)"><rect width="14.3" height="10.7" fill="#cfae7e"/><rect x="2" y="1" width="3" height="2" fill="#e8cc60"/><rect x="8" y="2" width="2.5" height="2.5" fill="#e0c050"/><rect x="5" y="5" width="2" height="2" fill="#e08a60"/><rect x="10" y="6" width="3" height="2" fill="#e8d070"/><rect x="1" y="7" width="2" height="2" fill="#d89080"/></g></svg>
<div class="tx" style="left:353.5px;top:483px;color:#167516">BLS_00054.jpg</div>
<svg class="ic" style="left:641.4px;top:484px" viewBox="0 0 15 15"><circle cx="7.5" cy="7.5" r="7.5" fill="#78bb20"/><path d="M3.2 7.8 H10.8" stroke="#e6f3d2" stroke-width="1.3" stroke-linecap="round"/><path d="M7.4 3.8 L11.3 7.8 L7.4 11.8" fill="none" stroke="#fff" stroke-width="1.3" stroke-linecap="round" stroke-linejoin="round"/></svg>
<div class="tx" style="left:680.3px;top:483px;color:#b5b5b5">BLS_00054.jpg</div>
<div class="cb" style="top:507.3px"></div>
<svg style="left:266.5px;top:507.3px" width="12" height="12" viewBox="0 0 12 12"><path d="M2.9 6.6 L5.1 8.9 L9.2 3.2" fill="none" stroke="#fff" stroke-width="1.4" stroke-linecap="round" stroke-linejoin="round"/></svg>
<svg style="left:336.1px;top:507px" width="14.3" height="10.7" viewBox="0 0 14.3 10.7"><clipPath id="c13"><rect width="14.3" height="10.7" rx="1.3"/></clipPath><g clip-path="url(#c13)"><rect width="14.3" height="10.7" fill="#c8a57b"/></g></svg>
<div class="tx" style="left:353.5px;top:505px;color:#167516">BLS_00084.jpg</div>
<svg class="ic" style="left:641.4px;top:506px" viewBox="0 0 15 15"><circle cx="7.5" cy="7.5" r="7.5" fill="#78bb20"/><path d="M3.2 7.8 H10.8" stroke="#e6f3d2" stroke-width="1.3" stroke-linecap="round"/><path d="M7.4 3.8 L11.3 7.8 L7.4 11.8" fill="none" stroke="#fff" stroke-width="1.3" stroke-linecap="round" stroke-linejoin="round"/></svg>
<div class="tx" style="left:680.3px;top:505px;color:#b5b5b5">BLS_00084.jpg</div>
<div style="left:262px;top:524.6px;width:699px;height:22px;background:#f4f4f4"></div>
<div class="cb" style="top:529.3px"></div>
<svg style="left:266.5px;top:529.3px" width="12" height="12" viewBox="0 0 12 12"><path d="M2.9 6.6 L5.1 8.9 L9.2 3.2" fill="none" stroke="#fff" stroke-width="1.4" stroke-linecap="round" stroke-linejoin="round"/></svg>
<svg style="left:336.1px;top:529px" width="14.3" height="10.7" viewBox="0 0 14.3 10.7"><clipPath id="c14"><rect width="14.3" height="10.7" rx="1.3"/></clipPath><g clip-path="url(#c14)"><rect width="14.3" height="10.7" fill="#c2a27c"/><rect x="6" y="4" width="6" height="5" fill="#b8946a"/><rect x="1" y="1" width="4" height="3" fill="#cbb08c"/></g></svg>
<div class="tx" style="left:353.5px;top:527px;color:#167516">BLS_00128.jpg</div>
<svg class="ic" style="left:641.4px;top:528px" viewBox="0 0 15 15"><circle cx="7.5" cy="7.5" r="7.5" fill="#78bb20"/><path d="M3.2 7.8 H10.8" stroke="#e6f3d2" stroke-width="1.3" stroke-linecap="round"/><path d="M7.4 3.8 L11.3 7.8 L7.4 11.8" fill="none" stroke="#fff" stroke-width="1.3" stroke-linecap="round" stroke-linejoin="round"/></svg>
<div class="tx" style="left:680.3px;top:527px;color:#b5b5b5">BLS_00128.jpg</div>
<div class="cb" style="top:551.3px"></div>
<svg style="left:266.5px;top:551.3px" width="12" height="12" viewBox="0 0 12 12"><path d="M2.9 6.6 L5.1 8.9 L9.2 3.2" fill="none" stroke="#fff" stroke-width="1.4" stroke-linecap="round" stroke-linejoin="round"/></svg>
<svg style="left:337px;top:548px" width="13" height="17" viewBox="0 0 13 17"><path d="M1.5 0.5 H7.8 L12.5 5.2 V14.6 a1 1 0 0 1-1 1 H1.5 a1 1 0 0 1-1-1 V1.5 a1 1 0 0 1 1-1 Z" fill="#fff" stroke="#d4d4d4" stroke-width="0.9"/><path d="M7.8 0.5 V4.2 a1 1 0 0 0 1 1 H12.5" fill="#f2f2f2" stroke="#d4d4d4" stroke-width="0.8"/><rect x="2.8" y="6" width="7.4" height="1.3" fill="#c9a27a"/><rect x="2.8" y="7.3" width="7.4" height="2.6" fill="#8fb8ec"/><rect x="2.8" y="9.9" width="7.4" height="1.6" fill="#5a6e8a"/><rect x="2.8" y="11.5" width="4" height="2" fill="#b7b7b7"/><circle cx="8.6" cy="12" r="1.9" fill="#8a7a6a"/></svg>
<div class="tx" style="left:353.5px;top:549px;color:#167516">BLS_00289.jpg</div>
<svg class="ic" style="left:641.4px;top:550px" viewBox="0 0 15 15"><circle cx="7.5" cy="7.5" r="7.5" fill="#78bb20"/><path d="M3.2 7.8 H10.8" stroke="#e6f3d2" stroke-width="1.3" stroke-linecap="round"/><path d="M7.4 3.8 L11.3 7.8 L7.4 11.8" fill="none" stroke="#fff" stroke-width="1.3" stroke-linecap="round" stroke-linejoin="round"/></svg>
<div class="tx" style="left:680.3px;top:549px;color:#b5b5b5">BLS_00289.jpg</div>
<div style="left:262px;top:568.6px;width:699px;height:22px;background:#f4f4f4"></div>
<div class="cb" style="top:573.3px"></div>
<svg style="left:266.5px;top:573.3px" width="12" height="12" viewBox="0 0 12 12"><path d="M2.9 6.6 L5.1 8.9 L9.2 3.2" fill="none" stroke="#fff" stroke-width="1.4" stroke-linecap="round" stroke-linejoin="round"/></svg>
<svg style="left:336.1px;top:573px" width="14.3" height="10.7" viewBox="0 0 14.3 10.7"><clipPath id="c16"><rect width="14.3" height="10.7" rx="1.3"/></clipPath><g clip-path="url(#c16)"><rect width="14.3" height="10.7" fill="#c8a57b"/></g></svg>
<div class="tx" style="left:353.5px;top:571px;color:#167516">BLS_00332.jpg</div>
<svg class="ic" style="left:641.4px;top:572px" viewBox="0 0 15 15"><circle cx="7.5" cy="7.5" r="7.5" fill="#78bb20"/><path d="M3.2 7.8 H10.8" stroke="#e6f3d2" stroke-width="1.3" stroke-linecap="round"/><path d="M7.4 3.8 L11.3 7.8 L7.4 11.8" fill="none" stroke="#fff" stroke-width="1.3" stroke-linecap="round" stroke-linejoin="round"/></svg>
<div class="tx" style="left:680.3px;top:571px;color:#b5b5b5">BLS_00332.jpg</div>
<div class="cb" style="top:595.3px"></div>
<svg style="left:266.5px;top:595.3px" width="12" height="12" viewBox="0 0 12 12"><path d="M2.9 6.6 L5.1 8.9 L9.2 3.2" fill="none" stroke="#fff" stroke-width="1.4" stroke-linecap="round" stroke-linejoin="round"/></svg>
<svg style="left:336.1px;top:595px" width="14.3" height="10.7" viewBox="0 0 14.3 10.7"><clipPath id="c17"><rect width="14.3" height="10.7" rx="1.3"/></clipPath><g clip-path="url(#c17)"><rect width="14.3" height="10.7" fill="#62ac2c"/><path d="M1 9 L5 2 M4 10 L9 1 M8 10 L13 2" stroke="#9ad050" stroke-width="1.2"/><rect x="10" y="6" width="3" height="3" fill="#4a9020"/></g></svg>
<div class="tx" style="left:353.5px;top:593px;color:#167516">BLS_00353.jpg</div>
<svg class="ic" style="left:641.4px;top:594px" viewBox="0 0 15 15"><circle cx="7.5" cy="7.5" r="7.5" fill="#78bb20"/><path d="M3.2 7.8 H10.8" stroke="#e6f3d2" stroke-width="1.3" stroke-linecap="round"/><path d="M7.4 3.8 L11.3 7.8 L7.4 11.8" fill="none" stroke="#fff" stroke-width="1.3" stroke-linecap="round" stroke-linejoin="round"/></svg>
<div class="tx" style="left:680.3px;top:593px;color:#b5b5b5">BLS_00353.jpg</div>
<div style="left:262px;top:612.6px;width:699px;height:22px;background:#f4f4f4"></div>
<div class="cb" style="top:617.3px"></div>
<svg style="left:266.5px;top:617.3px" width="12" height="12" viewBox="0 0 12 12"><path d="M2.9 6.6 L5.1 8.9 L9.2 3.2" fill="none" stroke="#fff" stroke-width="1.4" stroke-linecap="round" stroke-linejoin="round"/></svg>
<svg style="left:337px;top:614px" width="13" height="17" viewBox="0 0 13 17"><path d="M1.5 0.5 H7.8 L12.5 5.2 V14.6 a1 1 0 0 1-1 1 H1.5 a1 1 0 0 1-1-1 V1.5 a1 1 0 0 1 1-1 Z" fill="#fff" stroke="#d4d4d4" stroke-width="0.9"/><path d="M7.8 0.5 V4.2 a1 1 0 0 0 1 1 H12.5" fill="#f2f2f2" stroke="#d4d4d4" stroke-width="0.8"/><rect x="2.8" y="6" width="7.4" height="1.3" fill="#c9a27a"/><rect x="2.8" y="7.3" width="7.4" height="2.6" fill="#8fb8ec"/><rect x="2.8" y="9.9" width="7.4" height="1.6" fill="#5a6e8a"/><rect x="2.8" y="11.5" width="4" height="2" fill="#b7b7b7"/><circle cx="8.6" cy="12" r="1.9" fill="#8a7a6a"/></svg>
<div class="tx" style="left:353.5px;top:615px;color:#167516">BLS_00617.jpg</div>
<svg class="ic" style="left:641.4px;top:616px" viewBox="0 0 15 15"><circle cx="7.5" cy="7.5" r="7.5" fill="#78bb20"/><path d="M3.2 7.8 H10.8" stroke="#e6f3d2" stroke-width="1.3" stroke-linecap="round"/><path d="M7.4 3.8 L11.3 7.8 L7.4 11.8" fill="none" stroke="#fff" stroke-width="1.3" stroke-linecap="round" stroke-linejoin="round"/></svg>
<div class="tx" style="left:680.3px;top:615px;color:#b5b5b5">BLS_00617.jpg</div>
<div style="left:282px;top:216px;width:1px;height:418px;background:#dcdcdc"></div>
<div style="left:638px;top:216px;width:1px;height:418px;background:#dcdcdc"></div>
<div style="left:657px;top:216px;width:1px;height:418px;background:#dcdcdc"></div>
<div style="left:262px;top:634px;width:700px;height:1px;background:#c9c9c9"></div>
<div style="left:282px;top:643px;width:83px;height:23px;border-radius:3px;background:#1668f5"></div>
<svg style="left:282px;top:643px" width="83" height="23" viewBox="0 0 83 23"><path d="M38.6 4.8 L50.3 11.5 L38.6 18.2 Z" fill="#fff"/></svg>
<div style="left:375px;top:643px;width:548px;height:23px;border-radius:3px;background:#d5d5d5"></div>
<svg style="left:929px;top:645px" width="18" height="20" viewBox="0 0 18 20" fill="none" stroke="#5e5e5e" stroke-width="1.25"><path d="M3 4 a1.5 1.5 0 0 1 1.5-1.5 H10.7 L15.1 6.9 V15.7 a1.5 1.5 0 0 1-1.5 1.5 H4.5 a1.5 1.5 0 0 1-1.5-1.5 Z" fill="#fff" stroke-linejoin="round"/><path d="M10.9 2.7 V6.5 H14.9" stroke-linejoin="round"/><path d="M5.6 5.5 H8.6 M5.6 8.5 H12.3 M5.6 11.4 H12.3 M5.6 14.4 H12.3" stroke-width="1.1"/></svg>
<div style="left:282.5px;top:673.5px;font-size:11px;color:#777">Ready</div>
<div class="bl" style="left:139px;top:46px;width:2px;height:82px"></div>
<div class="bl" style="left:361px;top:46px;width:2px;height:36px"></div>
<div class="bl" style="left:214px;top:80px;width:149px;height:2px"></div>
<div class="bl" style="left:214px;top:80px;width:2px;height:214px"></div>
<div class="bl" style="left:210px;top:289px;width:10px;height:10px;border-radius:50%"></div>
<div class="bl" style="left:639px;top:46px;width:2px;height:148px"></div>
<div class="bl" style="left:81px;top:694px;width:2px;height:52px"></div>
<div class="bl" style="left:938px;top:668px;width:2px;height:78px"></div>
</body></html>
